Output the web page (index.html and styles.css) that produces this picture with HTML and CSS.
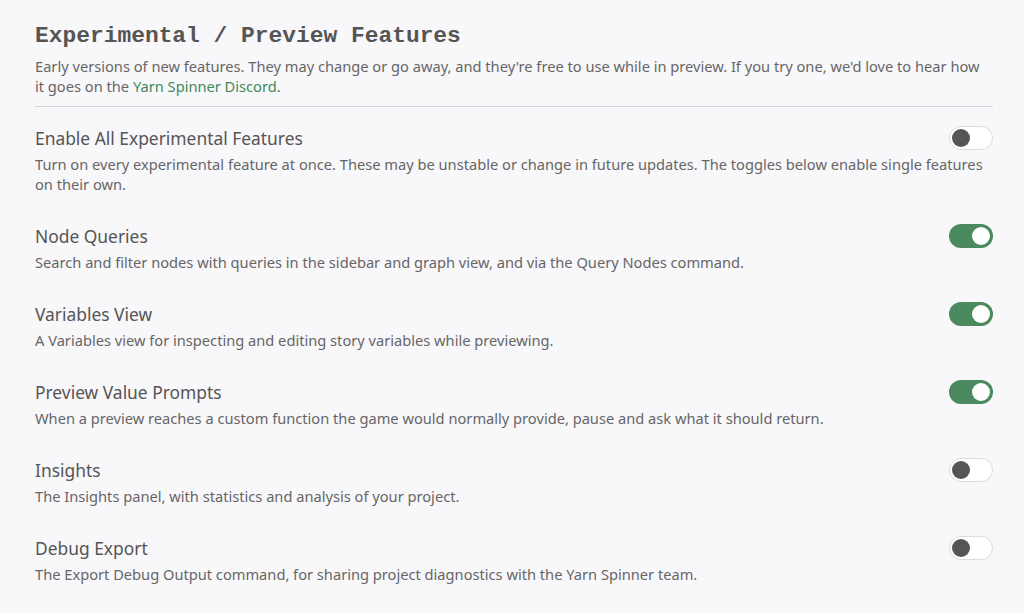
FILE: index.html
```html
<!DOCTYPE html>
<html>
<head>
<meta charset="utf-8">
<link rel="stylesheet" href="styles.css">
</head>
<body>
<div class="page">
  <h1 class="title">Experimental / Preview Features</h1>
  <p class="intro">Early versions of new features. They may change or go away, and they're free to use while in preview. If you try one, we'd love to hear how it goes on the <a class="link" href="#">Yarn Spinner Discord</a>.</p>
  <div class="divider"></div>
  <div class="list">
    <div class="row">
      <div class="head">
        <div class="name">Enable All Experimental Features</div>
        <div class="toggle off"><span class="knob"></span></div>
      </div>
      <div class="desc">Turn on every experimental feature at once. These may be unstable or change in future updates. The toggles below enable single features on their own.</div>
    </div>
    <div class="row">
      <div class="head">
        <div class="name">Node Queries</div>
        <div class="toggle on"><span class="knob"></span></div>
      </div>
      <div class="desc">Search and filter nodes with queries in the sidebar and graph view, and via the Query Nodes command.</div>
    </div>
    <div class="row">
      <div class="head">
        <div class="name">Variables View</div>
        <div class="toggle on"><span class="knob"></span></div>
      </div>
      <div class="desc">A Variables view for inspecting and editing story variables while previewing.</div>
    </div>
    <div class="row">
      <div class="head">
        <div class="name">Preview Value Prompts</div>
        <div class="toggle on"><span class="knob"></span></div>
      </div>
      <div class="desc">When a preview reaches a custom function the game would normally provide, pause and ask what it should return.</div>
    </div>
    <div class="row">
      <div class="head">
        <div class="name">Insights</div>
        <div class="toggle off"><span class="knob"></span></div>
      </div>
      <div class="desc">The Insights panel, with statistics and analysis of your project.</div>
    </div>
    <div class="row">
      <div class="head">
        <div class="name">Debug Export</div>
        <div class="toggle off"><span class="knob"></span></div>
      </div>
      <div class="desc">The Export Debug Output command, for sharing project diagnostics with the Yarn Spinner team.</div>
    </div>
  </div>
</div>
</body>
</html>
```
FILE: styles.css
```css
html, body {
  margin: 0;
  padding: 0;
  background: #f8f7fa;
}
body {
  font-family: "Noto Sans", "Open Sans", sans-serif;
  color: #555555;
}
.page {
  padding: 22px 31px 0 35px;
}
.title {
  margin: 0;
  font-family: "Liberation Mono", monospace;
  font-weight: bold;
  font-size: 22.9px;
  line-height: 28px;
  color: #555555;
}
.intro {
  margin: 6px 0 0 0;
  padding-right: 6px;
  font-size: 14.65px;
  line-height: 20px;
  color: #666666;
}
.link {
  color: #3f8a5a;
  text-decoration: none;
}
.divider {
  height: 1px;
  background: #d6d5da;
  margin-top: 10px;
}
.list {
  display: flex;
  flex-direction: column;
  gap: 30px;
  margin-top: 19px;
}
.row {
  display: flex;
  flex-direction: column;
}
.head {
  display: flex;
  align-items: center;
  justify-content: space-between;
  gap: 16px;
}
.name {
  font-size: 17.4px;
  line-height: 24px;
  color: #555555;
}
.desc {
  margin-top: 4px;
  font-size: 14.65px;
  line-height: 20px;
  color: #666666;
}
.toggle {
  flex: none;
  width: 44px;
  height: 24px;
  box-sizing: border-box;
  border-radius: 12px;
  display: flex;
  align-items: center;
  padding: 0 3px;
}
.toggle.off {
  background: #ffffff;
  border: 1px solid #dcdbe0;
  justify-content: flex-start;
  padding: 0 2px;
}
.toggle.on {
  background: #4a8a5e;
  justify-content: flex-end;
}
.knob {
  width: 18px;
  height: 18px;
  border-radius: 50%;
}
.off .knob {
  background: #555555;
}
.on .knob {
  background: #ffffff;
}
```
